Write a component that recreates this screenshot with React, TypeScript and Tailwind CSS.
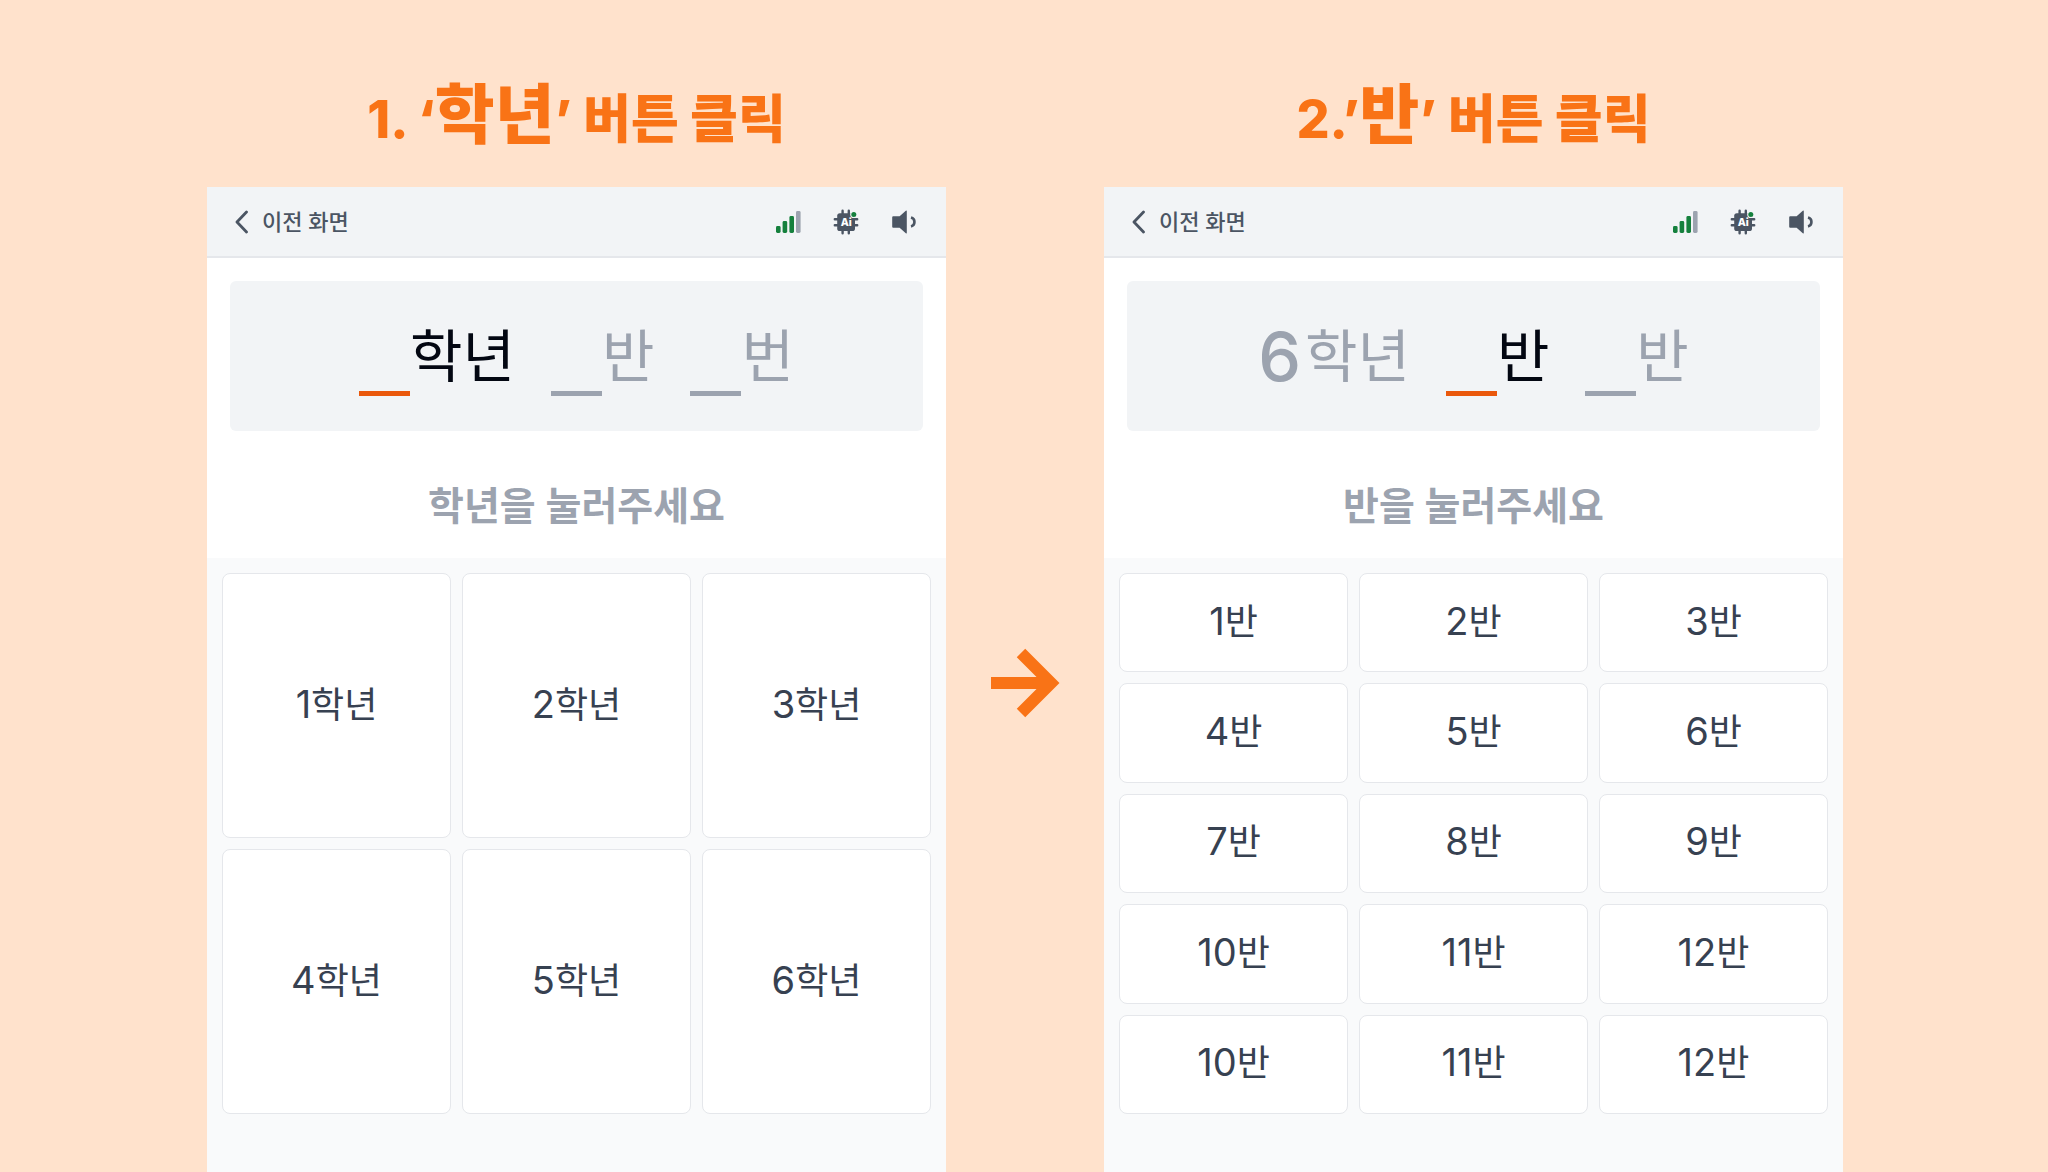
import type { ReactNode } from "react";

type Slot = { value?: string; unit: string; active?: boolean };

const GRADES = ["1", "2", "3", "4", "5", "6"];
const CLASSES = ["1", "2", "3", "4", "5", "6", "7", "8", "9", "10", "11", "12", "10", "11", "12"];

function SignalIcon() {
  return (
    <svg width="26" height="24" viewBox="0 0 26 24" aria-hidden="true">
      <rect x="1" y="16" width="4.6" height="7" rx="1.4" fill="#15803d" />
      <rect x="7.6" y="11" width="4.6" height="12" rx="1.4" fill="#15803d" />
      <rect x="14.4" y="6" width="4.6" height="17" rx="1.4" fill="#15803d" />
      <rect x="21" y="1" width="4.6" height="22" rx="1.4" fill="#9ca3af" />
    </svg>
  );
}

function ChipIcon() {
  return (
    <svg width="26" height="26" viewBox="0 0 26 26" aria-hidden="true">
      <path
        d="M9.6 1.8v22.4M15.8 1.8v22.4M1.8 10.2h22.4M1.8 16.2h22.4"
        stroke="#4b5563"
        strokeWidth="2.4"
        strokeLinecap="round"
      />
      <rect x="4.2" y="4.2" width="17.8" height="17.8" rx="2.6" fill="#4b5563" />
      <circle cx="20.8" cy="5.4" r="3.6" fill="#f2f4f6" />
      <circle cx="20.8" cy="5.4" r="2.5" fill="#15803d" />
      <text x="13.2" y="17" textAnchor="middle" fontSize="10.5" fontWeight="800" fill="#ffffff" fontFamily="Inter, sans-serif">
        Ai
      </text>
    </svg>
  );
}

function SpeakerIcon() {
  return (
    <svg width="26" height="26" viewBox="0 0 26 26" fill="none" aria-hidden="true">
      <path
        d="M2.2 7.2h6.4l6.200-5.400q1-.8 1 .5v21.400q0 1.300-1 .5l-6.200-5.400H2.200q-1 0-1-1V8.200q0-1 1-1z"
        fill="#4b5563"
      />
      <path d="M20 8.600c4.600 1.200 4.600 7.600 0 8.800" stroke="#4b5563" strokeWidth="2.600" />
    </svg>
  );
}

function Display({ slots }: { slots: Slot[] }) {
  return (
    <div className="mx-[23px] mt-[23px] flex h-[150px] items-center justify-center gap-9 rounded-md bg-[#f2f4f6]">
      {slots.map((slot, i) => (
        <div
          key={i}
          className={
            slot.active
              ? "flex h-20 items-center text-[57px] leading-none text-[#030712]"
              : "flex h-20 items-center text-[57px] leading-none text-[#9ca3af]"
          }
        >
          {slot.value ? (
            <span className="pr-1 text-[68px] leading-none font-medium">{slot.value}</span>
          ) : (
            <span
              className={
                slot.active
                  ? "w-[51px] self-end border-b-[5px] border-[#ea580c]"
                  : "w-[51px] self-end border-b-[5px] border-[#9ca3af]"
              }
            />
          )}
          <span>{slot.unit}</span>
        </div>
      ))}
    </div>
  );
}

function Screen({
  title,
  slots,
  prompt,
  options,
  unit,
}: {
  title: ReactNode;
  slots: Slot[];
  prompt: string;
  options: string[];
  unit: string;
}) {
  return (
    <section className="flex flex-col">
      <h2 className="flex h-[187px] items-baseline justify-center pt-[75px] text-[52px] leading-[80px] font-extrabold whitespace-pre text-[#f97316]">
        {title}
      </h2>
      <div className="flex flex-1 flex-col bg-white">
        <header className="flex h-[71px] items-center justify-between border-b-2 border-[#e5e7eb] bg-[#f2f4f6] pr-[29px] pl-7">
          <button type="button" className="flex items-center gap-3.5 text-[22px] leading-8 font-medium text-[#4b5563]">
            <svg width="13" height="24" viewBox="0 0 13 24" fill="none" aria-hidden="true">
              <path d="M11.500 2L2 12l9.500 10" stroke="currentColor" strokeWidth="2.800" strokeLinecap="round" strokeLinejoin="round" />
            </svg>
            이전 화면
          </button>
          <div className="flex items-center gap-8">
            <SignalIcon />
            <ChipIcon />
            <SpeakerIcon />
          </div>
        </header>
        <Display slots={slots} />
        <p className="flex h-[127px] items-center justify-center pt-[22px] text-[39px] leading-none font-semibold text-[#9ca3af]">
          {prompt}
        </p>
        <div className="flex-1 bg-[#f9fafb] px-[15px] pt-[15px] pb-[58px]">
          <div className="grid min-h-[541px] auto-rows-fr grid-cols-3 gap-[11px]">
            {options.map((n, i) => (
              <button
                key={i}
                type="button"
                className="rounded-lg border border-[#e5e7eb] bg-white pb-1 text-[36px] leading-none text-[#374151]"
              >
                <span className="text-[38px]">{n}</span>
                {unit}
              </button>
            ))}
          </div>
        </div>
      </div>
    </section>
  );
}

export default function App() {
  return (
    <main className="grid min-h-screen grid-cols-[1fr_158px_1fr] bg-[#ffe2cc] pr-[205px] pl-[207px] font-['Inter','Noto_Sans_CJK_KR',sans-serif]">
      <Screen
        title={
          <>
            1. ‘<span className="text-[65px]">학년</span>’ 버튼 클릭
          </>
        }
        slots={[{ unit: "학년", active: true }, { unit: "반" }, { unit: "번" }]}
        prompt="학년을 눌러주세요"
        options={GRADES}
        unit="학년"
      />
      <div className="flex items-center justify-center pt-[194px]">
        <svg width="70" height="70" viewBox="0 0 70 70" fill="none" aria-hidden="true">
          <path d="M1 35H60M31 5L61 35L31 65" stroke="#f97316" strokeWidth="12" />
        </svg>
      </div>
      <Screen
        title={
          <>
            2.’<span className="text-[65px]">반</span>’ 버튼 클릭
          </>
        }
        slots={[{ value: "6", unit: "학년" }, { unit: "반", active: true }, { unit: "반" }]}
        prompt="반을 눌러주세요"
        options={CLASSES}
        unit="반"
      />
    </main>
  );
}
